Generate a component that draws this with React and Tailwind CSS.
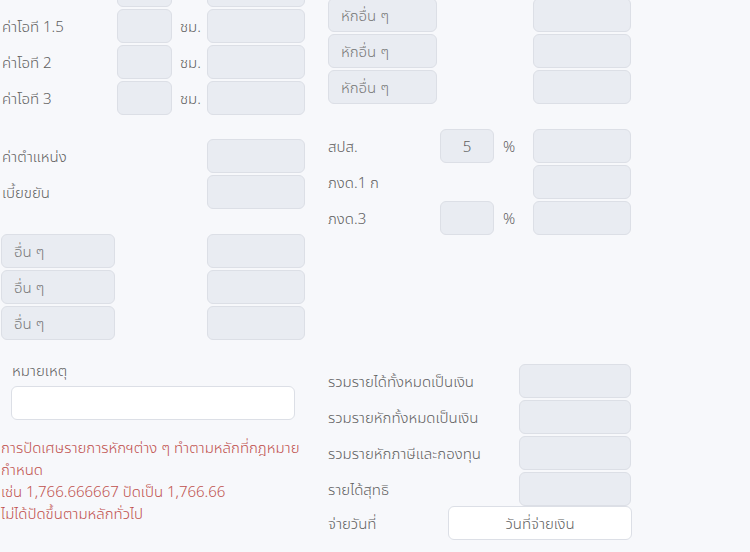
const box = "h-[34px] rounded-md border border-[#dcdfe6] bg-[#e9ecf2]";
const label = "text-[15px] font-light text-[#5f5f5f]";

const OtRow = ({ name }) => (
  <div className="flex items-center">
    <div className={`w-[116px] pl-[1px] ${label}`}>{name}</div>
    <div className={`w-[55px] ${box}`}></div>
    <div className={`w-[35px] pl-[8px] ${label}`}>{name ? "ชม." : ""}</div>
    <div className={`w-[98px] ${box}`}></div>
  </div>
);

const AmountRow = ({ name }) => (
  <div className="flex items-center">
    <div className={`w-[206px] pl-[1px] ${label}`}>{name}</div>
    <div className={`w-[98px] ${box}`}></div>
  </div>
);

const OtherRow = ({ text, w, gap }) => (
  <div className="flex items-center">
    <div className={`${w} ${box} flex items-center pl-3 ${label} text-[#777]`}>{text}</div>
    <div className={gap}></div>
    <div className={`w-[98px] ${box}`}></div>
  </div>
);

const PercentRow = ({ name, value, showPct }) => (
  <div className="flex items-center">
    <div className={`w-[112px] ${label}`}>{name}</div>
    {showPct ? (
      <>
        <div className={`w-[54px] ${box} flex items-center justify-center ${label}`}>{value}</div>
        <div className={`w-[39px] pl-[9px] ${label}`}>%</div>
      </>
    ) : (
      <div className="w-[93px]"></div>
    )}
    <div className={`w-[98px] ${box}`}></div>
  </div>
);

const TotalRow = ({ name }) => (
  <div className="flex items-center">
    <div className={`w-[191px] ${label}`}>{name}</div>
    <div className={`w-[112px] ${box}`}></div>
  </div>
);

export default function App() {
  return (
    <div
      className="min-h-[552px] h-[552px] overflow-hidden bg-[#f7f8fb] pl-[1px]"
      style={{ fontFamily: '"Noto Sans", "Noto Sans Thai", sans-serif' }}
    >
      <div className="-mt-[27px] flex items-start gap-[22px]">
        {/* left: earnings */}
        <div className="w-[305px] flex flex-col">
          <div className="flex flex-col gap-[2px]">
            <OtRow name="" />
            <OtRow name="ค่าโอที 1.5" />
            <OtRow name="ค่าโอที 2" />
            <OtRow name="ค่าโอที 3" />
          </div>
          <div className="mt-[24px] flex flex-col gap-[2px]">
            <AmountRow name="ค่าตำแหน่ง" />
            <AmountRow name="เบี้ยขยัน" />
          </div>
          <div className="mt-[25px] flex flex-col gap-[2px]">
            <OtherRow text="อื่น ๆ" w="w-[114px]" gap="w-[92px]" />
            <OtherRow text="อื่น ๆ" w="w-[114px]" gap="w-[92px]" />
            <OtherRow text="อื่น ๆ" w="w-[114px]" gap="w-[92px]" />
          </div>
        </div>

        {/* right: deductions */}
        <div className="w-[304px] flex flex-col pt-[25px]">
          <div className="flex flex-col gap-[2px]">
            <OtherRow text="หักอื่น ๆ" w="w-[109px]" gap="w-[96px]" />
            <OtherRow text="หักอื่น ๆ" w="w-[109px]" gap="w-[96px]" />
            <OtherRow text="หักอื่น ๆ" w="w-[109px]" gap="w-[96px]" />
          </div>
          <div className="mt-[25px] flex flex-col gap-[2px]">
            <PercentRow name="สปส." value="5" showPct />
            <PercentRow name="ภงด.1 ก" />
            <PercentRow name="ภงด.3" value="" showPct />
          </div>
        </div>
      </div>

      <div className="mt-5 flex items-start gap-[22px]">
        <div className="w-[305px]">
          <div className={`pl-[11px] leading-5 ${label}`}>หมายเหตุ</div>
          <div className="ml-[10px] mt-1.5 h-[34px] w-[284px] rounded-md border border-[#dcdfe6] bg-white"></div>
          <div className="mt-4 text-[15px] font-light leading-[22px] text-[#c0504d]">
            <div className="whitespace-nowrap">การปัดเศษรายการหักฯต่าง ๆ ทำตามหลักที่กฎหมาย</div>
            <div>กำหนด</div>
            <div>เช่น 1,766.666667 ปัดเป็น 1,766.66</div>
            <div>ไม่ได้ปัดขึ้นตามหลักทั่วไป</div>
          </div>
        </div>

        <div className="w-[304px] pt-1 flex flex-col">
          <div className="flex flex-col gap-[2px]">
            <TotalRow name="รวมรายได้ทั้งหมดเป็นเงิน" />
            <TotalRow name="รวมรายหักทั้งหมดเป็นเงิน" />
            <TotalRow name="รวมรายหักภาษีและกองทุน" />
            <TotalRow name="รายได้สุทธิ" />
          </div>
          <div className="flex items-center">
            <div className={`w-[120px] ${label}`}>จ่ายวันที่</div>
            <button className="h-[34px] w-[184px] rounded-md border border-[#dcdfe6] bg-white text-[15px] font-light text-[#5f5f5f]">
              วันที่จ่ายเงิน
            </button>
          </div>
        </div>
      </div>
    </div>
  );
}
